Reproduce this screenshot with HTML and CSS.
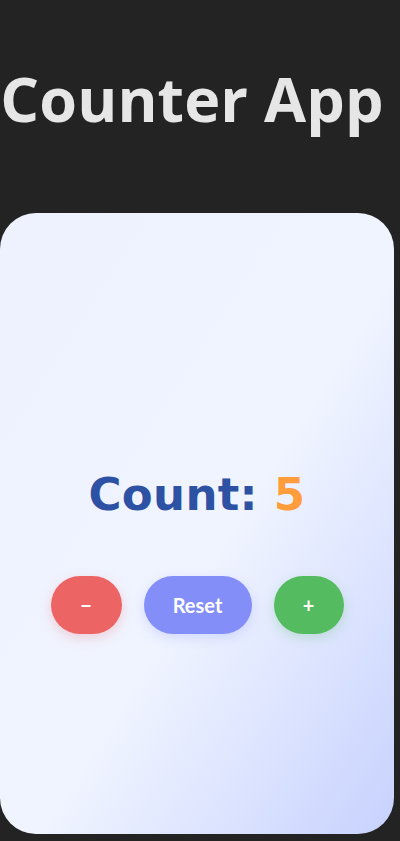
FILE: index.html
```html
<!DOCTYPE html>
<html lang="en">
<head>
<meta charset="utf-8">
<title>Counter App</title>
<link rel="stylesheet" href="styles.css">
</head>
<body>
<div class="app">
  <h1 class="title">Counter App</h1>
  <div class="card">
    <div class="count">Count: <span class="value">5</span></div>
    <div class="buttons">
      <button class="btn btn-dec">&minus;</button>
      <button class="btn btn-reset">Reset</button>
      <button class="btn btn-inc">+</button>
    </div>
  </div>
</div>
</body>
</html>
```
FILE: styles.css
```css
html, body {
  margin: 0;
  padding: 0;
  background: #232323;
  height: 100%;
}
.app {
  width: 394px;
  display: flex;
  flex-direction: column;
  align-items: stretch;
}
.title {
  margin: 61px 0 76px;
  font-family: "Open Sans", "Liberation Sans", sans-serif;
  font-weight: 700;
  font-size: 61px;
  line-height: 76px;
  color: #e6e6e6;
  text-align: center;
  white-space: nowrap;
  letter-spacing: 0.1px;
  transform: translateX(-5px);
}
.card {
  height: 621px;
  box-sizing: border-box;
  border-radius: 36px;
  background: linear-gradient(to bottom right, #eef2ff 0%, #f0f4ff 55%, #c7d2fe 100%);
  display: flex;
  flex-direction: column;
  align-items: center;
  padding-top: 255px;
}
.count {
  font-family: "DejaVu Sans", sans-serif;
  font-weight: 700;
  font-size: 45px;
  line-height: 53px;
  letter-spacing: 0.3px;
  color: #2d51a3;
}
.value {
  color: #ff9c3b;
}
.buttons {
  margin-top: 55px;
  display: flex;
  gap: 22px;
}
.btn {
  border: none;
  border-radius: 30px;
  height: 58px;
  padding: 0;
  font-family: "Lato", "Open Sans", sans-serif;
  font-weight: 700;
  font-size: 20px;
  color: #ffffff;
  cursor: pointer;
}
.btn-dec {
  background: #ec6464;
  width: 71px;
  box-shadow: 0 4px 12px rgba(236, 100, 100, 0.25);
}
.btn-reset {
  background: #838ef8;
  width: 108px;
  box-shadow: 0 4px 12px rgba(131, 142, 248, 0.25);
}
.btn-inc {
  background: #55bb60;
  width: 70px;
  box-shadow: 0 4px 12px rgba(85, 187, 96, 0.25);
}
```
